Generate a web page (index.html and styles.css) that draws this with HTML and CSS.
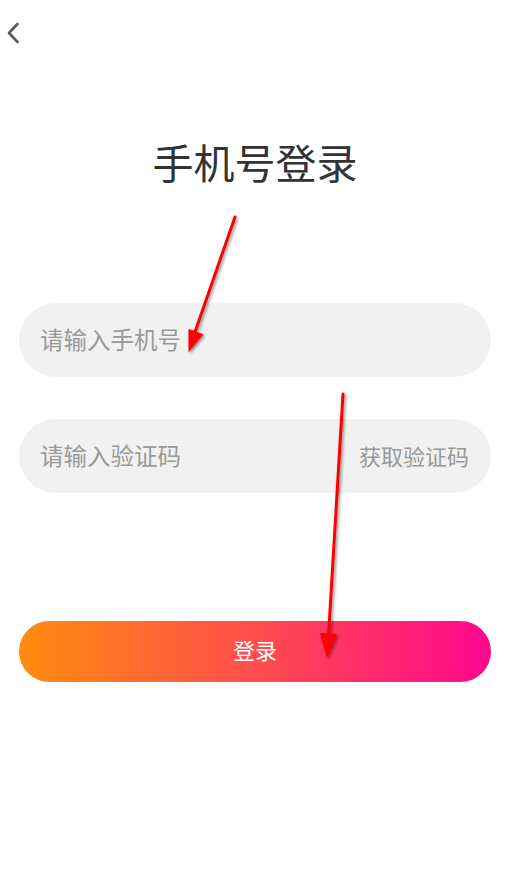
FILE: index.html
```html
<!DOCTYPE html>
<html lang="zh">
<head>
<meta charset="utf-8">
<title>手机号登录</title>
<link rel="stylesheet" href="styles.css">
</head>
<body>
<div class="page">
  <header class="topbar">
    <svg class="back" width="14" height="22" viewBox="0 0 14 22"><path d="M11.5 2 L3 11 L11.5 20" fill="none" stroke="#5a5a5a" stroke-width="2.6" stroke-linecap="round" stroke-linejoin="round"/></svg>
  </header>
  <h1 class="title">手机号登录</h1>
  <form class="form">
    <div class="field">
      <span class="placeholder">请输入手机号</span>
    </div>
    <div class="field">
      <span class="placeholder">请输入验证码</span>
      <span class="getcode">获取验证码</span>
    </div>
    <button type="button" class="login">登录</button>
  </form>
  <svg class="annot" width="505" height="873" viewBox="0 0 505 873">
    <defs>
      <filter id="sh" x="-50%" y="-50%" width="200%" height="200%">
        <feDropShadow dx="1.5" dy="1.5" stdDeviation="1.5" flood-color="#000" flood-opacity="0.45"/>
      </filter>
    </defs>
    <g filter="url(#sh)" fill="#ff0000" stroke="#ff0000" stroke-linecap="round">
      <line x1="235" y1="217" x2="195" y2="332" stroke-width="3"/>
      <polygon points="189,351 189,329.5 202.5,334.5" stroke-width="1"/>
      <line x1="343" y1="394" x2="328.5" y2="636" stroke-width="3"/>
      <polygon points="327,656 320.5,633.5 336,634.5" stroke-width="1"/>
    </g>
  </svg>
</div>
</body>
</html>
```
FILE: styles.css
```css
html, body {
  margin: 0;
  padding: 0;
  background: #fff;
}
body {
  font-family: "Noto Sans CJK SC", "Noto Sans", sans-serif;
}
.page {
  position: relative;
  width: 505px;
  height: 873px;
  overflow: hidden;
}
.topbar {
  height: 64px;
  display: flex;
  align-items: flex-start;
  padding: 22px 0 0 6px;
  box-sizing: border-box;
}
.back {
  display: block;
}
.title {
  margin: 72px 0 0;
  font-size: 41px;
  line-height: 50px;
  font-weight: 400;
  color: #333;
  text-align: center;
  padding-left: 5px;
}
.form {
  margin: 117px 14px 0 19px;
  display: flex;
  flex-direction: column;
}
.field {
  height: 74px;
  border-radius: 37px;
  background: #f1f1f1;
  display: flex;
  align-items: center;
  justify-content: space-between;
  padding: 0 22px 3px 21px;
  box-sizing: border-box;
  margin-bottom: 42px;
  font-size: 23.5px;
  color: #999;
}
.getcode {
  font-size: 22px;
  color: #999;
}
.login {
  margin-top: 86px;
  height: 61px;
  border: 0;
  border-radius: 31px;
  background: linear-gradient(90deg, #ff8c0e 0%, #ff4d4d 50%, #ff078f 100%);
  color: #fff;
  font-family: inherit;
  font-size: 22px;
  padding: 0 0 5px;
}
.annot {
  position: absolute;
  left: 0;
  top: 0;
  pointer-events: none;
}
```
